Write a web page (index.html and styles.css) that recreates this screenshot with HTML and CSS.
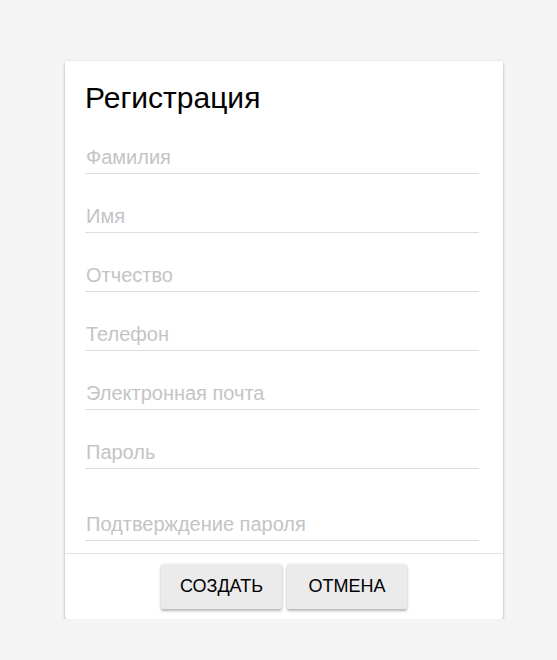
FILE: index.html
```
<!DOCTYPE html>
<html lang="ru">
<head>
<meta charset="utf-8">
<title>Регистрация</title>
<link rel="stylesheet" href="styles.css">
</head>
<body>
<div class="page">
  <form class="card">
    <div class="card-body">
      <h2 class="title">Регистрация</h2>
      <input class="field" type="text" placeholder="Фамилия">
      <input class="field" type="text" placeholder="Имя">
      <input class="field" type="text" placeholder="Отчество">
      <input class="field" type="tel" placeholder="Телефон">
      <input class="field" type="email" placeholder="Электронная почта">
      <input class="field" type="password" placeholder="Пароль">
      <input class="field field-last" type="password" placeholder="Подтверждение пароля">
    </div>
    <div class="card-actions">
      <button class="btn" type="button">Создать</button>
      <button class="btn" type="button">Отмена</button>
    </div>
  </form>
</div>
</body>
</html>
```
FILE: styles.css
```
html, body {
  margin: 0;
  padding: 0;
  background: #f4f4f4;
  font-family: "Liberation Sans", Arial, sans-serif;
}

.page {
  padding: 61px 0 0 65px;
}

.card {
  width: 438px;
  background: #fff;
  border-radius: 2px;
  box-shadow: 0 2px 3px rgba(0, 0, 0, 0.28), 0 0 2px rgba(0, 0, 0, 0.1);
  box-sizing: border-box;
}

.card-body {
  padding: 20px 24px 12px 20px;
}

.title {
  margin: 0;
  font-size: 30px;
  line-height: 34px;
  font-weight: normal;
  color: #000;
}

.field {
  display: block;
  width: 100%;
  box-sizing: border-box;
  height: 27px;
  margin: 32px 0 0;
  padding: 0 0 6px 1px;
  border: 0;
  border-bottom: 1px solid #dedede;
  outline: none;
  background: transparent;
  font-family: "Liberation Sans", Arial, sans-serif;
  font-size: 20px;
  color: #000;
}

.field::placeholder {
  color: #c4c4c4;
  opacity: 1;
}

.field-last {
  margin-top: 45px;
}

.card-actions {
  display: flex;
  justify-content: center;
  gap: 5px;
  padding: 10px 0 10px;
  border-top: 1px solid #e4e4e4;
}

.btn {
  min-width: 120px;
  height: 45px;
  padding: 0 19px;
  border: 0;
  border-radius: 2px;
  background: #ebebeb;
  box-shadow: 0 2px 3px rgba(0, 0, 0, 0.28), 0 0 2px rgba(0, 0, 0, 0.08);
  font-family: "Liberation Sans", Arial, sans-serif;
  font-size: 18px;
  text-transform: uppercase;
  color: #000;
  cursor: pointer;
}
```
